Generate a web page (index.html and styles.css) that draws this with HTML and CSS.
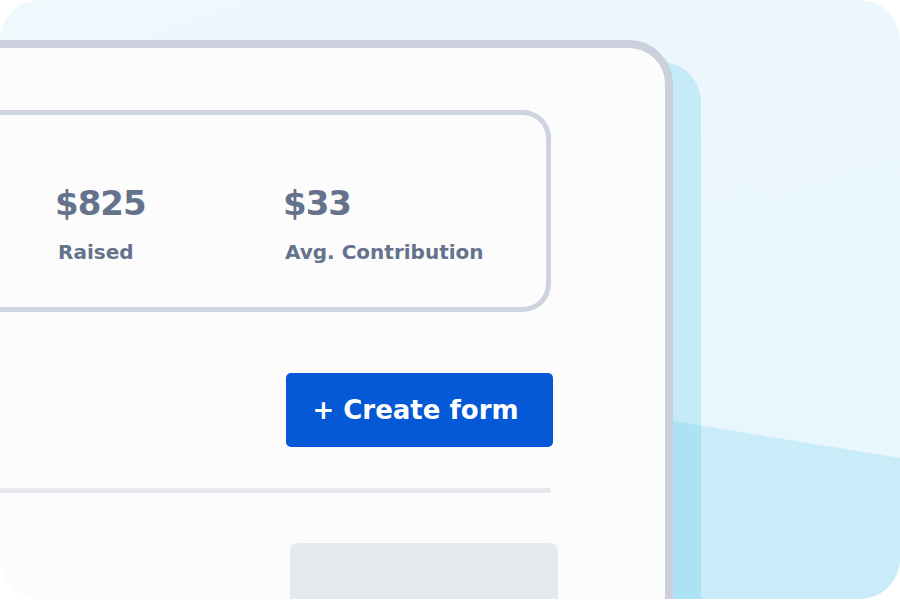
FILE: index.html
```html
<!doctype html>
<html lang="en">
<head>
  <meta charset="utf-8">
  <title>Fundraising forms</title>
  <link rel="stylesheet" href="styles.css">
</head>
<body>

<div class="scene">
  <div class="backcard"></div>
  <div class="wave"></div>

  <div class="card">
    <div class="stats">
      <div class="stat stat-first">
        <div class="stat-value">$825</div>
        <div class="stat-label">Raised</div>
      </div>
      <div class="stat">
        <div class="stat-value">$33</div>
        <div class="stat-label">Avg. Contribution</div>
      </div>
    </div>

    <button class="createBtn" type="button">+ Create form</button>

    <div class="divider"></div>

    <div class="placeholder"></div>
  </div>
</div>

</body>
</html>
```

FILE: styles.css
```css
body {
    margin: 0;
    background: #ffffff;
    font-family: "DejaVu Sans", "Liberation Sans", sans-serif;
}

.scene {
    position: relative;
    width: 900px;
    height: 599px;
    overflow: hidden;
    border-radius: 40px;
    background: linear-gradient(160deg, #eef8fd 0%, #eaf7fd 60%, #e7f6fd 100%);
    padding-top: 40px;
    box-sizing: border-box;
}

/* light blue sheet behind the card */
.backcard {
    position: absolute;
    left: 400px;
    top: 62px;
    width: 301px;
    height: 600px;
    border-radius: 40px;
    background: #c5eaf8;
}

.wave {
    position: absolute;
    left: 0;
    top: 0;
    width: 900px;
    height: 600px;
    background: rgba(36, 186, 225, 0.16);
    clip-path: polygon(600px 409px, 900px 458px, 900px 600px, 600px 600px);
}

.card {
    position: relative;
    margin-left: -60px;
    width: 733px;
    height: 640px;
    box-sizing: border-box;
    border: 8px solid #cbd0dc;
    border-radius: 44px;
    background: #fcfcfd;
    padding: 62px 114px 0 0;
    display: flex;
    flex-direction: column;
}

.stats {
    height: 202px;
    box-sizing: border-box;
    border: 5px solid #cdd3df;
    border-left: none;
    border-radius: 0 28px 28px 0;
    padding: 68px 0 0 107px;
    display: flex;
}

.stat-first {
    width: 228px;
}

.stat-value {
    font-size: 34px;
    line-height: 40px;
    font-weight: bold;
    letter-spacing: -1px;
    color: #65728b;
}

.stat-label {
    margin-top: 17px;
    margin-left: 2px;
    font-size: 20px;
    line-height: 24px;
    font-weight: bold;
    color: #65728b;
}

.stat-first .stat-label {
    margin-left: 3px;
}

.createBtn {
    align-self: flex-end;
    margin-top: 61px;
    margin-right: -2px;
    width: 267px;
    height: 74px;
    border: none;
    border-radius: 5px;
    background: #0558d6;
    color: #ffffff;
    font-family: "DejaVu Sans", "Liberation Sans", sans-serif;
    font-size: 26px;
    font-weight: bold;
    padding: 0 8px 0 0;
}

.divider {
    margin-top: 41px;
    height: 5px;
    border-radius: 3px;
    background: #e5e8ed;
}

.placeholder {
    align-self: flex-end;
    margin-top: 50px;
    margin-right: -7px;
    width: 268px;
    height: 100px;
    border-radius: 8px;
    background: #e6e9ee;
}
```
